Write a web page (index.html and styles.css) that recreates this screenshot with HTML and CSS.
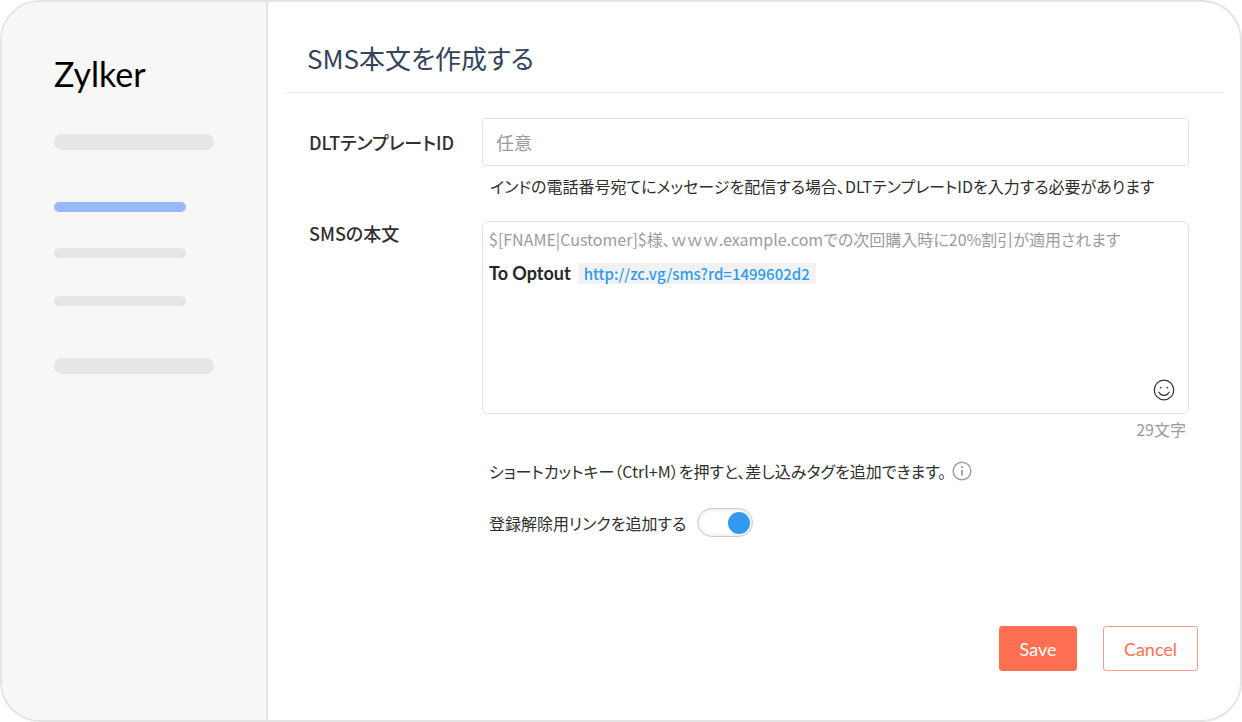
FILE: index.html

```html
<!DOCTYPE html>
<html lang="ja">
<head>
    <meta charset="UTF-8">
    <meta name="viewport" content="width=device-width, initial-scale=1.0">
    <title>SMS本文を作成する</title>
    <link rel="stylesheet" href="styles.css">
</head>
<body>
    <div class="window">
        <aside class="sidebar">
            <div class="logo">Zylker</div>
            <div class="bar bar-wide bar-first"></div>
            <div class="bar bar-active"></div>
            <div class="bar bar-small bar-second"></div>
            <div class="bar bar-small bar-third"></div>
            <div class="bar bar-wide bar-last"></div>
        </aside>

        <main class="main">
            <h1 class="title">SMS本文を作成する</h1>

            <div class="row row-dlt">
                <label class="label">DLTテンプレートID</label>
                <div class="field">
                    <div class="input">任意</div>
                    <p class="hint">インドの電話番号宛てにメッセージを配信する場合、DLTテンプレートIDを入力する必要があります</p>
                </div>
            </div>

            <div class="row row-body">
                <label class="label">SMSの本文</label>
                <div class="field">
                    <div class="textarea">
                        <div class="placeholder">$[FNAME|Customer]$様、ｗｗｗ.example.comでの次回購入時に20%割引が適用されます</div>
                        <div class="optout"><strong>To Optout</strong><span class="link">http://zc.vg/sms?rd=1499602d2</span></div>
                        <svg class="smiley" width="22" height="22" viewBox="0 0 22 22" fill="none" stroke="#333" stroke-width="1.2">
                            <circle cx="11" cy="11" r="9.8"/>
                            <circle cx="7.6" cy="8.6" r="0.9" fill="#333" stroke="none"/>
                            <circle cx="14.4" cy="8.6" r="0.9" fill="#333" stroke="none"/>
                            <path d="M6 13.2c1.2 2.2 3 3.2 5 3.2s3.8-1 5-3.2" stroke-linecap="round"/>
                        </svg>
                    </div>
                    <div class="count">29文字</div>
                    <div class="shortcut">
                        <span>ショートカットキー（Ctrl+M）を押すと、差し込みタグを追加できます。</span>
                        <svg width="20" height="20" viewBox="0 0 20 20" fill="none" stroke="#9c9c9c" stroke-width="1.4">
                            <circle cx="10" cy="10" r="8.8"/>
                            <path d="M10 9v5.4" stroke-width="1.8"/>
                            <circle cx="10" cy="6.2" r="1.1" fill="#9c9c9c" stroke="none"/>
                        </svg>
                    </div>
                    <div class="unsubscribe">
                        <span>登録解除用リンクを追加する</span>
                        <div class="toggle"><div class="knob"></div></div>
                    </div>
                </div>
            </div>

            <div class="actions">
                <button class="btn btn-save">Save</button>
                <button class="btn btn-cancel">Cancel</button>
            </div>
        </main>
    </div>
</body>
</html>
```

FILE: styles.css

```css
* {
    box-sizing: border-box;
}

body {
    margin: 0;
    background-color: white;
    font-family: "Noto Sans CJK JP", sans-serif;
    font-feature-settings: "palt";
}

.window {
    display: flex;
    width: 1242px;
    height: 722px;
    border: 2px solid #e4e4e4;
    border-radius: 40px;
    overflow: hidden;
    background-color: white;
}

.sidebar {
    width: 266px;
    flex-shrink: 0;
    padding: 49px 0 0 52px;
    background-color: #f7f7f7;
    border-right: 2px solid #e4e4e4;
}

.logo {
    font-family: Lato, sans-serif;
    font-size: 34px;
    line-height: 46px;
    color: #000;
}

.bar {
    background-color: #e6e6e7;
    border-radius: 8px;
}

.bar-wide {
    width: 160px;
    height: 16px;
}

.bar-small {
    width: 132px;
    height: 10px;
}

.bar-first {
    margin-top: 37px;
}

.bar-active {
    width: 132px;
    height: 10px;
    margin-top: 52px;
    background-color: #9ab9fb;
}

.bar-second {
    margin-top: 36px;
}

.bar-third {
    margin-top: 38px;
}

.bar-last {
    margin-top: 52px;
}

.main {
    flex: 1;
    padding: 0 16px;
}

.title {
    height: 91px;
    margin: 0;
    padding: 37px 0 0 23px;
    font-size: 26px;
    line-height: 37px;
    font-weight: 400;
    color: #33435a;
    border-bottom: 1px solid #f0f0f0;
}

.row {
    display: flex;
    padding-left: 25px;
}

.row-dlt {
    margin-top: 25px;
}

.row-body {
    margin-top: 24px;
}

.label {
    width: 173px;
    flex-shrink: 0;
    font-size: 18px;
    font-weight: 500;
    color: #2f2f2f;
}

.row-dlt .label {
    padding-top: 12px;
    line-height: 24px;
}

.row-body .label {
    line-height: 24px;
}

.field {
    width: 707px;
}

.input {
    height: 48px;
    padding: 0 13px;
    font-size: 18px;
    line-height: 47px;
    color: #9b9b9b;
    border: 1px solid #e2e2e2;
    border-radius: 4px;
}

.hint {
    margin: 9px 0 0 8px;
    font-size: 16px;
    line-height: 22px;
    color: #2f2f2f;
    white-space: nowrap;
}

.textarea {
    position: relative;
    height: 193px;
    padding: 5px 6px;
    border: 1px solid #e2e2e2;
    border-radius: 6px;
}

.placeholder {
    font-size: 16px;
    line-height: 24px;
    color: #9b9b9b;
    white-space: nowrap;
}

.optout {
    display: flex;
    align-items: center;
    margin-top: 10px;
}

.optout strong {
    font-family: Lato, sans-serif;
    font-size: 18px;
    line-height: 24px;
    color: #262626;
}

.link {
    margin-left: 7px;
    padding: 0 6px;
    font-size: 15px;
    line-height: 21px;
    font-weight: 500;
    color: #2e9bf0;
    background-color: #f2f2f2;
}

.smiley {
    position: absolute;
    right: 13px;
    bottom: 12px;
}

.count {
    margin-top: 4px;
    padding-right: 3px;
    text-align: right;
    font-size: 16px;
    line-height: 22px;
    color: #9b9b9b;
}

.shortcut {
    display: flex;
    align-items: center;
    gap: 6px;
    margin: 20px 0 0 7px;
    font-size: 16px;
    line-height: 22px;
    color: #2f2f2f;
    white-space: nowrap;
}

.unsubscribe {
    display: flex;
    align-items: center;
    gap: 11px;
    margin: 26px 0 0 7px;
    font-size: 16px;
    color: #2f2f2f;
}

.toggle {
    display: flex;
    justify-content: flex-end;
    align-items: center;
    width: 56px;
    height: 29px;
    padding-right: 2px;
    background-color: white;
    border: 1px solid #c9c9c9;
    border-radius: 15px;
    box-shadow: inset 0 0 4px rgba(0, 0, 0, 0.15);
}

.knob {
    width: 22px;
    height: 22px;
    background-color: #3399f0;
    border-radius: 50%;
}

.actions {
    display: flex;
    justify-content: flex-end;
    gap: 26px;
    margin-top: 89px;
    padding-right: 26px;
}

.btn {
    height: 45px;
    padding: 0;
    font-family: Lato, sans-serif;
    font-size: 18px;
    border-radius: 3px;
    cursor: pointer;
}

.btn-save {
    width: 78px;
    color: white;
    background-color: #ff7052;
    border: 1px solid #ff7052;
}

.btn-cancel {
    width: 95px;
    color: #ff7052;
    background-color: white;
    border: 1px solid #ff9c87;
}
```
